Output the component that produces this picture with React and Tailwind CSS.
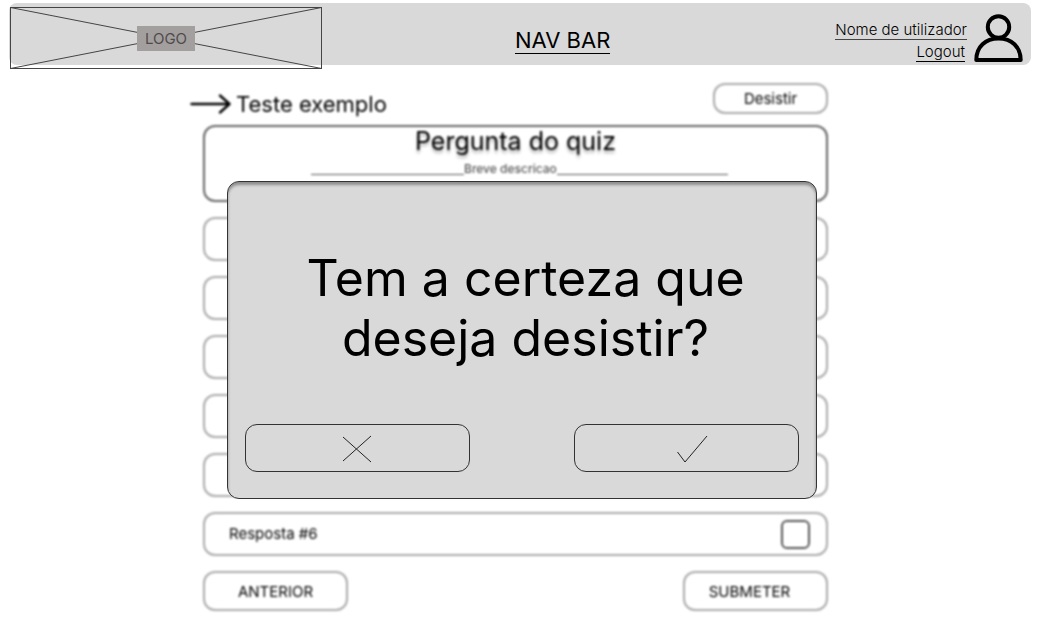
import { useState } from "react";

const answers = [1, 2, 3, 4, 5, 6];

function Logo() {
  return (
    <a href="#inicio" className="relative mt-1 ml-px block h-[62px] w-[312px] shrink-0">
      <svg className="h-full w-full" viewBox="0 0 312 62" fill="none" stroke="#444" strokeWidth="1">
        <rect x="0.5" y="0.5" width="311" height="61" />
        <path d="M0.5 0.5 311.5 61.5M311.5 0.5 0.5 61.5" />
      </svg>
      <span className="absolute inset-0 flex items-center justify-center">
        <span className="bg-[#a39f9e] px-2 text-[15px] leading-[25px] text-[#4f4b4b]">LOGO</span>
      </span>
    </a>
  );
}

function Header() {
  return (
    <header className="flex h-[62px] items-start rounded-lg bg-[#d9d9d9]">
      <Logo />
      <nav className="flex-1 pt-6 pr-8 text-center">
        <a href="#nav" className="inline-block border-b border-black text-[22px] leading-[26px]">
          NAV BAR
        </a>
      </nav>
      <div className="flex flex-col items-end pt-[18px] text-[15px] font-light">
        <a href="#perfil" className="border-b border-[#444] leading-[18px]">
          Nome de utilizador
        </a>
        <a href="#logout" className="mt-[3px] mr-0.5 border-b border-black leading-[18px]">
          Logout
        </a>
      </div>
      <svg className="mt-[11px] mr-2 ml-[7px] h-[50px] w-[49px]" viewBox="0 0 49 50" fill="none" stroke="#000" strokeWidth="4" strokeLinejoin="round">
        <circle cx="24.5" cy="13" r="10.7" />
        <path d="M2.3 46H46.7C46.7 32.5 37.4 24.5 24.5 24.5S2.3 32.5 2.3 46Z" />
      </svg>
    </header>
  );
}

function Quiz({ onQuit }) {
  return (
    <main className="mx-auto mt-[18px] max-w-[625px] text-[15px] text-black blur-[1px]">
      <div className="flex items-start justify-between">
        <h1 className="-ml-[13px] flex items-center gap-[5px] pt-1.5 text-[22px] leading-[30px]">
          <svg className="h-5 w-[41px]" viewBox="0 0 41 20" fill="none" stroke="#000" strokeWidth="2.4" strokeLinecap="round" strokeLinejoin="round">
            <path d="M1.5 10H39M30 1.5 39.5 10 30 18.5" />
          </svg>
          Teste exemplo
        </h1>
        <button type="button" onClick={onQuit} className="h-[31px] w-[115px] rounded-xl border-2 border-[#aaa] pt-0.5">
          Desistir
        </button>
      </div>

      <section className="mt-1.5 h-[77px] rounded-xl border-2 border-[#666] text-center">
        <h2 className="text-[25px] leading-[29px] text-shadow-[0_3px_3px_rgba(0,0,0,0.3)]">Pergunta do quiz</h2>
        <p className="mx-auto flex w-[425px] pl-2 text-[12px] leading-[26px] font-medium text-[#555]">
          <span className="mb-[7px] w-[153px] border-b border-[#555]" />
          Breve descricao
          <span className="mb-[7px] flex-1 border-b border-[#555]" />
        </p>
      </section>

      <ul className="mt-[15px] flex flex-col gap-[15px]">
        {answers.map((n) => (
          <li key={n}>
            <label className="flex h-11 items-center justify-between rounded-xl border-2 border-[#aaa] pr-4 pl-6">
              Resposta #{n}
              <input type="checkbox" className="size-[29px] appearance-none rounded-md border-2 border-[#555] checked:bg-[#555]" />
            </label>
          </li>
        ))}
      </ul>

      <div className="mt-[15px] flex justify-between">
        <button type="button" className="h-10 w-[145px] rounded-xl border-2 border-[#aaa] pt-0.5">
          ANTERIOR
        </button>
        <button type="button" className="h-10 w-[145px] rounded-xl border-2 border-[#aaa] pt-0.5 pr-3">
          SUBMETER
        </button>
      </div>
    </main>
  );
}

function QuitDialog({ onClose }) {
  const button = "flex h-12 w-[225px] items-center justify-center rounded-xl border border-[#333] pt-0.5";
  return (
    <div className="absolute inset-x-0 top-[181px] flex justify-center">
      <div
        role="dialog"
        aria-modal="true"
        aria-labelledby="quit-title"
        className="w-[590px] rounded-xl border border-[#333] bg-[#d9d9d9] px-[17px] pt-[66px] pb-[26px] shadow-[inset_0_3px_3px_rgba(0,0,0,0.35)]"
      >
        <h2 id="quit-title" className="pl-2 text-center text-[50px] leading-[60px]">
          Tem a certeza que deseja desistir?
        </h2>
        <div className="mt-14 flex justify-between">
          <button type="button" aria-label="Cancelar" onClick={onClose} className={button}>
            <svg className="h-7 w-[30px]" viewBox="0 0 30 28" fill="none" stroke="#222" strokeWidth="1">
              <path d="M1 2 29 27M29 1 1 26" />
            </svg>
          </button>
          <button type="button" aria-label="Confirmar" onClick={onClose} className={button}>
            <svg className="h-7 w-11" viewBox="0 0 44 28" fill="none" stroke="#222" strokeWidth="1">
              <path d="M13.5 17 21 27 43 1" />
            </svg>
          </button>
        </div>
      </div>
    </div>
  );
}

export default function App() {
  const [open, setOpen] = useState(true);
  return (
    <div className="relative bg-white pt-[3px] pb-5 font-['Inter',sans-serif] text-black">
      <div className="pr-3">
        <div className="pl-[9px]">
          <Header />
        </div>
        <Quiz onQuit={() => setOpen(true)} />
      </div>
      {open && <QuitDialog onClose={() => setOpen(false)} />}
    </div>
  );
}
